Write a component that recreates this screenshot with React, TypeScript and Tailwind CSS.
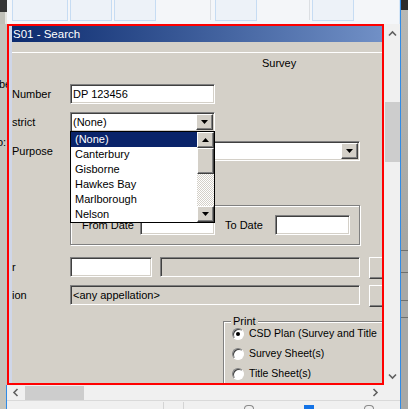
import React from "react";

// classic win2k bevels
const sunken =
  "border border-t-[#808080] border-l-[#808080] border-b-white border-r-white shadow-[inset_1px_1px_0_#404040,inset_-1px_-1px_0_#d4d0c8]";
const raised =
  "bg-[#d4d0c8] border border-t-white border-l-white border-b-[#404040] border-r-[#404040] shadow-[inset_-1px_-1px_0_#808080]";
const etched = "border border-[#808080] shadow-[inset_1px_1px_0_#ffffff,1px_1px_0_#ffffff]";

function Arrow({ up }: { up?: boolean }) {
  return (
    <svg width="7" height="4" viewBox="0 0 7 4">
      {up ? <path d="M3.5 0L7 4H0Z" fill="#000" /> : <path d="M0 0H7L3.5 4Z" fill="#000" />}
    </svg>
  );
}

function Chevron({ dir }: { dir: "up" | "down" | "left" | "right" }) {
  const d = {
    up: "M1 5.5L4.5 2L8 5.5",
    down: "M1 2.5L4.5 6L8 2.5",
    left: "M5.5 1L2 4.5L5.5 8",
    right: "M2.5 1L6 4.5L2.5 8",
  }[dir];
  return (
    <svg width="9" height="9" viewBox="0 0 9 9">
      <path d={d} fill="none" stroke="#606060" strokeWidth="1.6" />
    </svg>
  );
}

function DropButton() {
  return (
    <div className={`${raised} w-[17px] h-[16px] shrink-0 flex items-center justify-center mr-px`}>
      <Arrow />
    </div>
  );
}

function Radio({ checked, label }: { checked?: boolean; label: string }) {
  return (
    <div className="h-[20px] flex items-center gap-[5px] whitespace-nowrap">
      <div className="w-[12px] h-[12px] shrink-0 rounded-full border border-t-[#808080] border-l-[#808080] border-b-white border-r-white bg-white flex items-center justify-center shadow-[inset_1px_1px_0_#404040]">
        {checked && <div className="w-[4px] h-[4px] rounded-full bg-black" />}
      </div>
      <span className="text-[10.5px]">{label}</span>
    </div>
  );
}

const districts = ["(None)", "Canterbury", "Gisborne", "Hawkes Bay", "Marlborough", "Nelson"];

function DistrictList() {
  return (
    <div className="absolute left-[58px] top-[105px] w-[145px] h-[92px] border border-black bg-white flex">
      <div className="flex-1 flex flex-col">
        {districts.map((d, i) => (
          <div
            key={d}
            className={`h-[15px] leading-[15px] pl-[4px] text-[11px] ${i === 0 ? "bg-[#0a246a] text-white" : "text-black"}`}
          >
            {d}
          </div>
        ))}
      </div>
      <div className="w-[17px] flex flex-col">
        <div className={`${raised} h-[16px] flex items-center justify-center`}>
          <Arrow up />
        </div>
        <div className={`${raised} h-[26px]`} />
        <div className="h-[32px] bg-[repeating-conic-gradient(#d4d0c8_0_25%,#ffffff_0_50%)] bg-[length:2px_2px]" />
        <div className={`${raised} h-[16px] flex items-center justify-center`}>
          <Arrow />
        </div>
      </div>
    </div>
  );
}

function Dialog() {
  return (
    <div className="flex-1 min-w-0 relative overflow-hidden bg-[#d4d0c8] flex flex-col text-[11px] text-black whitespace-nowrap">
      <div className="h-[16px] shrink-0 bg-gradient-to-r from-[#0c2a6e] to-[#7190c6] text-white text-[11.5px] leading-[16px] pl-px">
        S01 - Search
      </div>
      <div className="h-[10px] shrink-0" />
      <div className="h-px shrink-0 bg-white" />
      <div className="h-[12px] mt-[4px] shrink-0 pl-[250px] leading-[12px]">Survey</div>

      <div className="mt-[15px] h-[20px] shrink-0 flex items-center">
        <span className="w-[58px] shrink-0">Number</span>
        <div className={`${sunken} bg-white w-[145px] h-[20px] shrink-0 flex items-center pl-[2px]`}>DP 123456</div>
      </div>

      <div className="mt-[8px] h-[20px] shrink-0 flex items-center">
        <span className="w-[58px] shrink-0">strict</span>
        <div className={`${sunken} bg-white w-[145px] h-[20px] shrink-0 flex items-center`}>
          <span className="flex-1 pl-[2px]">(None)</span>
          <DropButton />
        </div>
      </div>

      <div className="mt-[9px] h-[20px] shrink-0 flex items-center">
        <span className="w-[58px] shrink-0">Purpose</span>
        <div className={`${sunken} bg-white w-[290px] h-[20px] shrink-0 flex items-center`}>
          <span className="flex-1" />
          <DropButton />
        </div>
      </div>

      <div className={`${etched} mt-[44px] ml-[58px] w-[290px] h-[40px] shrink-0 flex items-start pt-[9px] pl-[11px]`}>
        <span className="w-[58px] shrink-0 h-[20px] leading-[20px]">From Date</span>
        <div className={`${sunken} bg-white w-[75px] h-[20px] shrink-0`} />
        <span className="ml-[10px] w-[50px] shrink-0 h-[20px] leading-[20px]">To Date</span>
        <div className={`${sunken} bg-white w-[75px] h-[20px] shrink-0`} />
      </div>

      <div className="mt-[12px] h-[22px] shrink-0 flex items-start">
        <span className="w-[58px] shrink-0 h-[20px] leading-[20px]">r</span>
        <div className={`${sunken} bg-white w-[82px] h-[20px] shrink-0`} />
        <div className={`${sunken} ml-[8px] w-[200px] h-[20px] shrink-0`} />
        <div className={`${raised} ml-[9px] w-[20px] h-[22px] shrink-0`} />
      </div>

      <div className="mt-[6px] h-[22px] shrink-0 flex items-start">
        <span className="w-[58px] shrink-0 h-[20px] leading-[20px]">ion</span>
        <div className={`${sunken} w-[290px] h-[20px] shrink-0 flex items-center pl-[2px]`}>&lt;any appellation&gt;</div>
        <div className={`${raised} ml-[9px] w-[20px] h-[22px] shrink-0`} />
      </div>

      <div className="mt-[14px] ml-[211px] h-[80px] shrink-0 relative border-t border-l border-[#808080] shadow-[inset_1px_1px_0_#ffffff] pt-[2px] pl-[8px]">
        <span className="absolute -top-[7px] left-[7px] bg-[#d4d0c8] px-[2px] leading-[13px]">Print</span>
        <Radio checked label="CSD Plan (Survey and Title" />
        <Radio label="Survey Sheet(s)" />
        <Radio label="Title Sheet(s)" />
      </div>

      <DistrictList />
    </div>
  );
}

export default function App() {
  return (
    <div className="w-[408px] h-[409px] overflow-hidden flex bg-[#f0f0f0] font-['Liberation_Sans',Arial,sans-serif]">
      {/* left edge of the window behind */}
      <div className="w-[7px] shrink-0 flex flex-col overflow-hidden text-[11px] text-black">
        <div className="h-[12px] bg-[#363636]" />
        <div className="h-[12px] bg-[#c0c0b8] border-r-2 border-[#e4e4e0]" />
        <div className="h-[361px] bg-[#c4c4bc] flex flex-col whitespace-nowrap">
          <span className="mt-[54px] -ml-px leading-[12px]">be</span>
          <span className="mt-[46px] -ml-[3px] leading-[12px]">o:</span>
        </div>
        <div className="flex-1 bg-[#c4c4bc] border-r border-[#2f8be6]" />
      </div>

      <div className="w-[393px] shrink-0 flex flex-col">
        {/* top thumbnails strip */}
        <div className="h-[24px] shrink-0 bg-[#f4f6f9] flex items-start">
          <div className="ml-[5px] w-[56px] h-[21px] bg-[#edf2f8] border border-t-0 border-[#c6dcf3]" />
          <div className="ml-[2px] w-[42px] h-[21px] bg-[#edf2f8] border border-t-0 border-[#c6dcf3]" />
          <div className="ml-[2px] w-[42px] h-[21px] bg-[#edf2f8] border border-t-0 border-[#c6dcf3]" />
          <div className="ml-[54px] w-px h-[20px] bg-[#dcdfe3]" />
          <div className="ml-[4px] w-[42px] h-[21px] bg-[#edf2f8] border border-t-0 border-[#c6dcf3]" />
          <div className="ml-[52px] w-px h-[20px] bg-[#dcdfe3]" />
          <div className="ml-[2px] w-[42px] h-[21px] bg-[#edf2f8] border border-t-0 border-[#c6dcf3]" />
          <div className="flex-1" />
          <div className="w-px h-[24px] bg-[#d6e6f6]" />
        </div>

        <div className="h-[361px] shrink-0 flex">
          <div className="w-[377px] shrink-0 border-2 border-[#ff0000] flex">
            <div className="w-[3px] shrink-0 bg-[#cfd6e8]" />
            <Dialog />
          </div>
          <div className="flex-1 flex flex-col items-center">
            <div className="h-[20px] flex items-center">
              <Chevron dir="up" />
            </div>
            <div className="mt-[58px] w-[15px] h-[60px] bg-[#cdcdcd]" />
            <div className="flex-1" />
            <div className="h-[18px] flex items-center">
              <Chevron dir="down" />
            </div>
          </div>
        </div>

        <div className="h-[15px] shrink-0 flex items-center">
          <div className="w-[18px] flex justify-center">
            <Chevron dir="left" />
          </div>
          <div className="w-[59px] h-[14px] bg-[#cdcdcd]" />
          <div className="flex-1" />
          <div className="w-[18px] flex justify-center">
            <Chevron dir="right" />
          </div>
          <div className="w-[16px]" />
        </div>

        <div className="flex-1 border-t border-[#d9d9d9] flex items-end">
          <div className="ml-[156px] w-px h-[7px] bg-[#d4d4d4]" />
          <div className="ml-[19px] w-px h-[7px] bg-[#d4d4d4]" />
          <div className="ml-[60px] w-[10px] h-[4px] rounded-t-full border border-b-0 border-[#8a8a8a]" />
          <div className="ml-[50px] w-[10px] h-[4px] bg-[#1473e6]" />
          <div className="ml-[50px] w-[10px] h-[4px] rounded-t-full border border-b-0 border-[#8a8a8a]" />
        </div>
      </div>

      {/* right edge: window border and desktop behind */}
      <div className="w-px shrink-0 bg-[#2f8be6]" />
      <div className="flex-1 flex flex-col bg-[#a9a9a6]">
        <div className="h-[10px] bg-[#2c2c2c]" />
        <div className="h-[240px] bg-[linear-gradient(#b8b8b4,#a6a6a2)]" />
        <div className="h-px bg-[#6f6f6c]" />
        <div className="h-[21px]" />
        <div className="h-px bg-[#6f6f6c]" />
        <div className="h-[27px]" />
        <div className="h-px bg-[#6f6f6c]" />
        <div className="h-[16px]" />
        <div className="h-px bg-[#6f6f6c]" />
        <div className="flex-1" />
      </div>
    </div>
  );
}
